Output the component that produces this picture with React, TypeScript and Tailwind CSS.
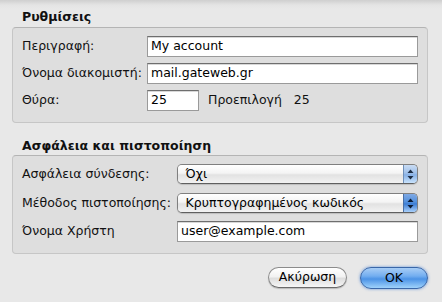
import React from "react"

const font = { fontFamily: '"DejaVu Sans", "Liberation Sans", sans-serif' }

function TextField({ value, className = "" }: { value: string; className?: string }) {
  return (
    <div
      className={`flex h-[21px] items-center border border-[#9a9a9a] border-t-[#6e6e6e] bg-white pl-[3px] text-[12.5px] text-black shadow-[inset_0_1px_0_#d8d8d8] ${className}`}
    >
      {value}
    </div>
  )
}

function Arrows({ dark }: { dark?: boolean }) {
  return (
    <svg width="7" height="11" viewBox="0 0 7 11" aria-hidden>
      <path d="M3.5 0.5 L6.5 4 L0.5 4 Z" fill={dark ? "#0a1a33" : "#1c2d45"} />
      <path d="M3.5 10.5 L6.5 7 L0.5 7 Z" fill={dark ? "#0a1a33" : "#1c2d45"} />
    </svg>
  )
}

function PopUp({ value, strong }: { value: string; strong?: boolean }) {
  return (
    <div className="flex h-[20px] w-[242px] items-stretch overflow-hidden rounded-[5px] border border-[#7f7f7f] border-b-[#5f5f5f] shadow-[0_1px_1px_rgba(0,0,0,0.15)]">
      <div className="flex flex-1 items-center bg-[linear-gradient(#ffffff,#f4f4f4_45%,#e2e2e2_55%,#f2f2f2)] pl-[8px] text-[12.5px] text-black">
        {value}
      </div>
      <div
        className={
          strong
            ? "flex w-[14px] items-center justify-center border-l border-[#4a6fa5] bg-[linear-gradient(#7fa9e4,#5390dd_45%,#3b7cd4_55%,#a9d0fb)]"
            : "flex w-[14px] items-center justify-center border-l border-[#6f8fb8] bg-[linear-gradient(#c9dcf3,#9fc0ea_45%,#86b0e6_55%,#c9e3fc)]"
        }
      >
        <Arrows dark={strong} />
      </div>
    </div>
  )
}

export default function App() {
  return (
    <div
      className="flex h-[302px] w-[442px] flex-col bg-[linear-gradient(#cfcfcf,#e4e4e4_5px,#e8e8e8_9px)] pl-[12px] pr-[14px] text-[12.5px] text-[#111111]"
      style={font}
    >
      <div className="pl-[10px] pt-[7px] text-[12.5px] font-bold leading-[20px]">Ρυθμίσεις</div>
      <div className="flex h-[96px] flex-col gap-[6px] rounded-[4px] border border-[#c6c6c6] border-t-[#b4b4b4] bg-[#dedede] pl-[9px] pr-[9px] pt-[8px]">
        <div className="flex items-center">
          <span className="w-[125px]">Περιγραφή:</span>
          <TextField value="My account" className="flex-1" />
        </div>
        <div className="flex items-center">
          <span className="w-[125px]">Όνομα διακομιστή:</span>
          <TextField value="mail.gateweb.gr" className="flex-1" />
        </div>
        <div className="flex items-center">
          <span className="w-[125px]">Θύρα:</span>
          <TextField value="25" className="w-[52px]" />
          <span className="ml-[9px]">Προεπιλογή</span>
          <span className="ml-[12px]">25</span>
        </div>
      </div>

      <div className="pl-[10px] pt-[13px] text-[12.5px] font-bold leading-[19px]">Ασφάλεια και πιστοποίηση</div>
      <div className="flex h-[99px] flex-col rounded-[4px] border border-[#c6c6c6] border-t-[#b4b4b4] bg-[#dedede] pl-[9px] pr-[9px] pt-[8px]">
        <div className="flex items-center">
          <span className="w-[155px]">Ασφάλεια σύνδεσης:</span>
          <PopUp value="Όχι" />
        </div>
        <div className="mt-[9px] flex items-center">
          <span className="w-[155px]">Μέθοδος πιστοποίησης:</span>
          <PopUp value="Κρυπτογραφημένος κωδικός" strong />
        </div>
        <div className="mt-[8px] flex items-center">
          <span className="w-[155px]">Όνομα Χρήστη</span>
          <TextField value="user@example.com" className="flex-1" />
        </div>
      </div>

      <div className="mt-[13px] flex justify-end gap-[13px]">
        <button
          type="button"
          className="flex h-[21px] w-[79px] items-center justify-center rounded-full border border-[#8c8c8c] border-b-[#6a6a6a] bg-[linear-gradient(#ffffff,#f2f2f2_45%,#dedede_55%,#f6f6f6)] text-[12.5px] text-black shadow-[0_1px_1px_rgba(0,0,0,0.2)]"
        >
          Ακύρωση
        </button>
        <button
          type="button"
          className="flex h-[22px] w-[68px] items-center justify-center rounded-full border border-[#3a67a8] bg-[linear-gradient(#a8cdf5,#73aef0_40%,#4c93e6_55%,#9fd2fb)] text-[12.5px] text-black shadow-[0_0_3px_rgba(40,110,210,0.7)]"
        >
          OK
        </button>
      </div>
    </div>
  )
}
